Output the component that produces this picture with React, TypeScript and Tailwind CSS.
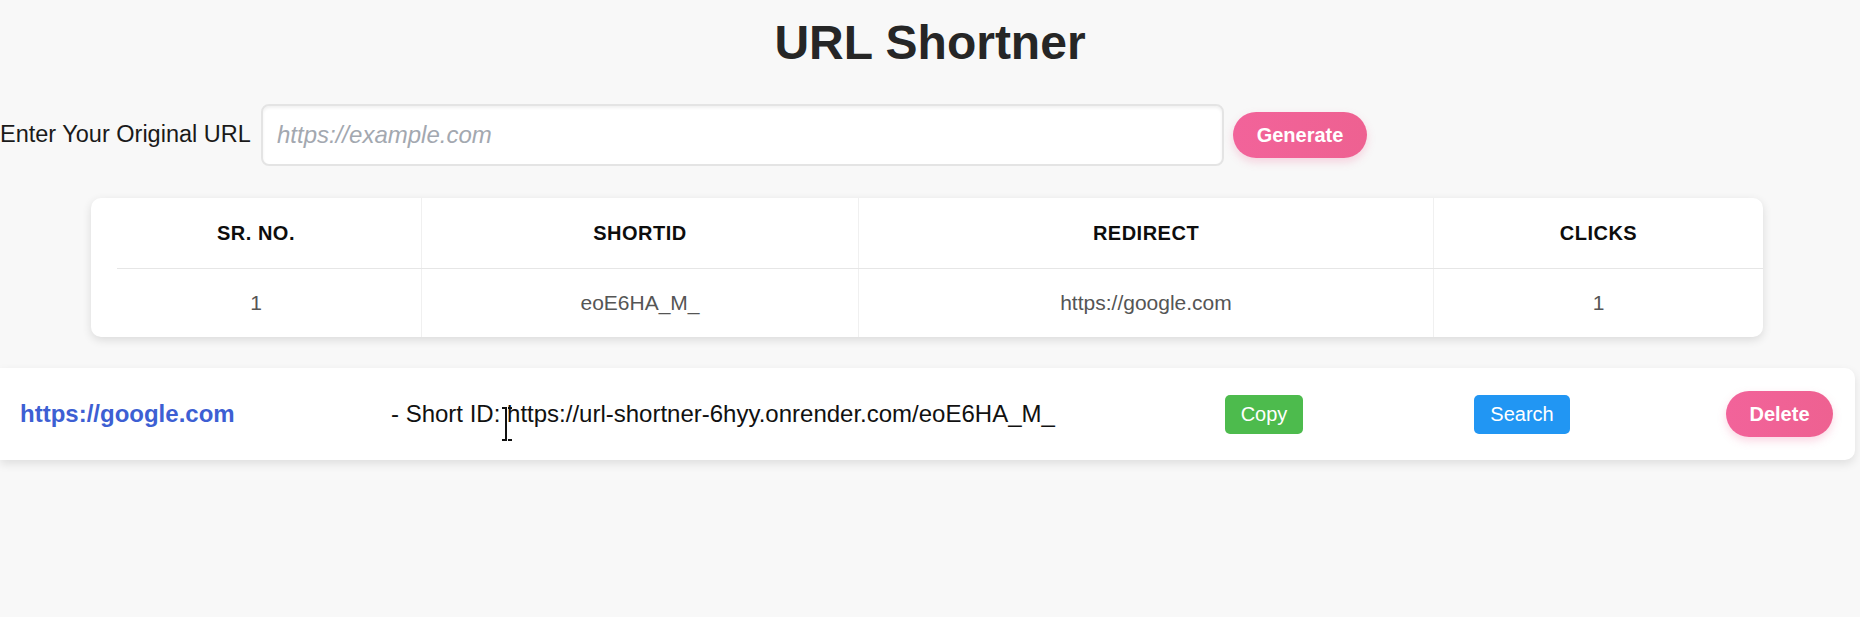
import React from "react";

const rows = [
  { id: 1, shortId: "eoE6HA_M_", redirect: "https://google.com", clicks: 1 },
];

export default function App() {
  return (
    <div className="min-h-screen bg-[#f8f8f8] font-['Liberation_Sans',Arial,sans-serif] text-[#222] overflow-hidden">
      <h1 className="pt-[19px] text-center text-[48px] font-bold leading-none text-[#262626]">
        URL Shortner
      </h1>

      <div className="mt-[37px] flex items-center">
        <label className="w-[261px] whitespace-nowrap text-[23.5px] text-[#1a1a1a]">
          Enter Your Original URL
        </label>
        <input
          type="text"
          placeholder="https://example.com"
          className="h-[62px] w-[963px] rounded-[8px] border-2 border-[#e4e4e4] bg-white pl-[14px] text-[24px] shadow-[inset_0_2px_3px_rgba(0,0,0,0.06)] outline-none placeholder:italic placeholder:text-[#a3a8b0]"
        />
        <button
          type="button"
          className="ml-[9px] h-[46px] w-[134px] rounded-full bg-gradient-to-r from-[#f2639a] to-[#ee6191] text-[20px] font-bold text-white shadow-[0_4px_8px_rgba(240,98,146,0.25)]"
        >
          Generate
        </button>
      </div>

      <div className="ml-[91px] mt-[32px] w-[1672px] overflow-hidden rounded-[10px] bg-white shadow-[0_3px_10px_rgba(0,0,0,0.12)]">
        <div className="grid grid-cols-[331px_437px_575px_329px] text-[20px] font-bold tracking-[0.5px] text-[#0d0d0d]">
          <div className="flex h-[70px] items-center justify-center border-r border-[#f0f0f0]">SR. NO.</div>
          <div className="flex h-[70px] items-center justify-center border-r border-[#f0f0f0]">SHORTID</div>
          <div className="flex h-[70px] items-center justify-center border-r border-[#f0f0f0]">REDIRECT</div>
          <div className="flex h-[70px] items-center justify-center">CLICKS</div>
        </div>
        <div className="ml-[26px] h-px bg-[#e6e6e6]" />
        {rows.map((r) => (
          <div
            key={r.id}
            className="grid grid-cols-[331px_437px_575px_329px] text-[21px] text-[#555]"
          >
            <div className="flex h-[68px] items-center justify-center border-r border-[#f0f0f0]">{r.id}</div>
            <div className="flex h-[68px] items-center justify-center border-r border-[#f0f0f0]">{r.shortId}</div>
            <div className="flex h-[68px] items-center justify-center border-r border-[#f0f0f0]">{r.redirect}</div>
            <div className="flex h-[68px] items-center justify-center">{r.clicks}</div>
          </div>
        ))}
      </div>

      <div className="relative mt-[31px] flex h-[92px] w-[1855px] items-center rounded-r-[10px] bg-white pl-[20px] shadow-[0_4px_10px_rgba(0,0,0,0.1)]">
        <a className="w-[371px] text-[24px] font-bold text-[#3d5fd3]">https://google.com</a>
        <span className="w-[834px] text-[24px] text-[#111]">
          - Short ID: https://url-shortner-6hyy.onrender.com/eoE6HA_M_
        </span>
        <button
          type="button"
          className="h-[39px] w-[78px] rounded-[5px] bg-[#4dbb4d] text-[20px] text-white"
        >
          Copy
        </button>
        <button
          type="button"
          className="ml-[171px] h-[39px] w-[96px] rounded-[5px] bg-[#2196f3] text-[20px] text-white"
        >
          Search
        </button>
        <button
          type="button"
          className="ml-[156px] h-[46px] w-[107px] rounded-full bg-gradient-to-r from-[#f2639a] to-[#ee6191] text-[20px] font-bold text-white shadow-[0_4px_8px_rgba(240,98,146,0.25)]"
        >
          Delete
        </button>
        <svg
          className="absolute left-[500px] top-[39px]"
          width="14"
          height="34"
          viewBox="0 0 14 34"
          fill="none"
          stroke="#111"
          strokeWidth="2"
        >
          <path d="M2 1h4v32H2M12 1H8M12 33H8" />
        </svg>
      </div>
    </div>
  );
}
